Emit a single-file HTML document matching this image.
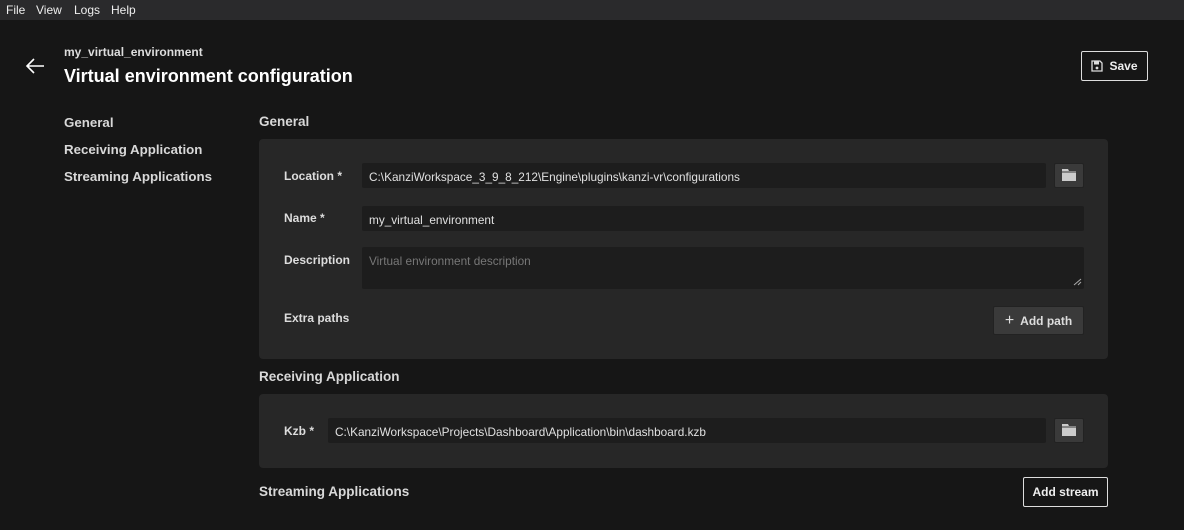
<!DOCTYPE html>
<html><head><style>
*{box-sizing:border-box;margin:0;padding:0}
body{width:1184px;height:530px;background:#161616;color:#ddd;font-family:"Liberation Sans",sans-serif;position:relative;overflow:hidden}
.a{position:absolute}
.menu{left:0;top:0;width:1184px;height:20px;background:#2a2a2c;font-size:12px;color:#eee}
.menu span{position:absolute;top:3px}
.nav{font-size:13.3px;font-weight:bold;color:#d8d8d8}
.h{font-size:13.5px;font-weight:bold;color:#d8d8d8}
.panel{background:#272727;border-radius:4px}
.lbl{font-size:12px;font-weight:bold;color:#ddd}
.inp{background:#1d1d1d;border-radius:2px;font-size:11.8px;color:#e0e0e0;padding:7px 7px}
.fb{background:#3a3a3a;border:1px solid #222;border-radius:2px;width:30px;height:25px}
.btn{border:1px solid #ddd;border-radius:2px;font-size:12px;font-weight:bold;color:#eee;display:flex;align-items:center;justify-content:center}
</style></head><body>
<div class="a menu"><span style="left:6px">File</span><span style="left:36px">View</span><span style="left:74px">Logs</span><span style="left:111px">Help</span></div>
<svg class="a" style="left:25px;top:57px" width="20" height="18" viewBox="0 0 20 18"><path d="M19 9H2M9 2L2 9l7 7" stroke="#fff" stroke-width="1.6" fill="none"/></svg>
<div class="a" style="left:64px;top:45px;font-size:12px;font-weight:bold;color:#ddd">my_virtual_environment</div>
<div class="a" style="left:64px;top:66px;font-size:18px;font-weight:bold;color:#fff">Virtual environment configuration</div>
<div class="a btn" style="left:1081px;top:51px;width:67px;height:30px;gap:6px"><svg width="12" height="12" viewBox="0 0 12 12"><path d="M1 1h8l2 2v8H1z" fill="none" stroke="#ddd" stroke-width="1.3"/><rect x="3" y="1.5" width="5" height="3" fill="#ddd"/><circle cx="6" cy="8" r="1.4" fill="#ddd"/></svg>Save</div>
<div class="a nav" style="left:64px;top:115px">General</div>
<div class="a nav" style="left:64px;top:142px">Receiving Application</div>
<div class="a nav" style="left:64px;top:169px">Streaming Applications</div>
<div class="a h" style="left:259px;top:114px">General</div>
<div class="a panel" style="left:259px;top:139px;width:849px;height:220px"></div>
<div class="a lbl" style="left:284px;top:169px">Location *</div>
<div class="a inp" style="left:362px;top:163px;width:684px;height:25px">C:\KanziWorkspace_3_9_8_212\Engine\plugins\kanzi-vr\configurations</div>
<div class="a fb" style="left:1054px;top:163px"></div>
<svg class="a" style="left:1061px;top:168px" width="16" height="14" viewBox="0 0 16 14"><path d="M1 1h6l1 2h7v10H1z" fill="#ccc"/><path d="M1 4h14" stroke="#3a3a3a"/></svg>
<div class="a lbl" style="left:284px;top:211px">Name *</div>
<div class="a inp" style="left:362px;top:206px;width:722px;height:25px">my_virtual_environment</div>
<div class="a lbl" style="left:284px;top:253px">Description</div>
<div class="a inp" style="left:362px;top:247px;width:722px;height:42px;color:#777">Virtual environment description</div>
<svg class="a" style="left:1073px;top:278px" width="9" height="8"><path d="M1 7L8 1M5 7L8 4" stroke="#aaa"/></svg>
<div class="a lbl" style="left:284px;top:311px">Extra paths</div>
<div class="a" style="left:993px;top:306px;width:91px;height:29px;background:#3a3a3a;border:1px solid #222;border-radius:2px;font-size:12px;font-weight:bold;color:#ddd;display:flex;align-items:center;justify-content:center;gap:6px"><span style="font-size:16px;font-weight:normal">+</span>Add path</div>
<div class="a h" style="left:259px;top:369px">Receiving Application</div>
<div class="a panel" style="left:259px;top:394px;width:849px;height:74px"></div>
<div class="a lbl" style="left:284px;top:424px">Kzb *</div>
<div class="a inp" style="left:328px;top:418px;width:718px;height:25px">C:\KanziWorkspace\Projects\Dashboard\Application\bin\dashboard.kzb</div>
<div class="a fb" style="left:1054px;top:418px"></div>
<svg class="a" style="left:1061px;top:423px" width="16" height="14" viewBox="0 0 16 14"><path d="M1 1h6l1 2h7v10H1z" fill="#ccc"/><path d="M1 4h14" stroke="#3a3a3a"/></svg>
<div class="a h" style="left:259px;top:484px">Streaming Applications</div>
<div class="a btn" style="left:1023px;top:477px;width:85px;height:30px">Add stream</div>
</body></html>
